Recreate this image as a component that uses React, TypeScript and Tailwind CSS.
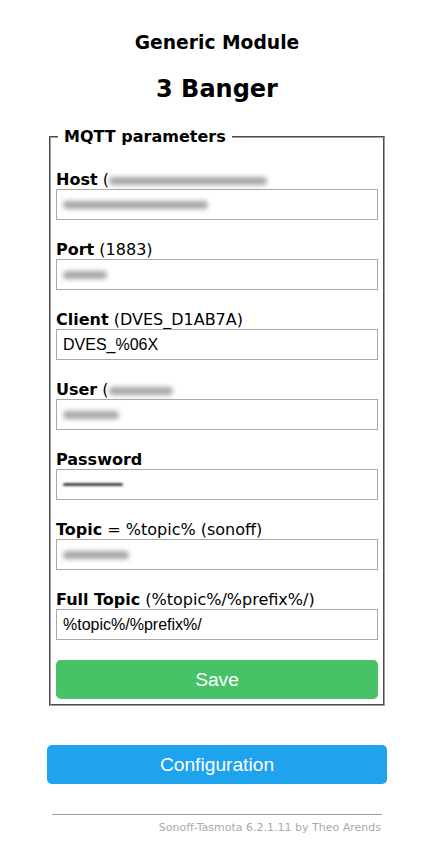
import React from "react";

const labelFont = "font-['DejaVu_Sans',Verdana,sans-serif]";
const inputFont = "font-['Liberation_Sans',Arial,sans-serif]";

function Blur({ text, w }: { text: string; w: string }) {
  return (
    <span
      className={`inline-block align-middle ${w} h-[8px] rounded-full bg-[#a5a5a5] blur-[2.5px]`}
      aria-label={text}
    />
  );
}

function Field({
  label,
  hint,
  value,
  blurValue,
}: {
  label: string;
  hint?: React.ReactNode;
  value?: string;
  blurValue?: React.ReactNode;
}) {
  return (
    <div className="flex flex-col">
      <div className={`${labelFont} text-[16px] leading-[19px] text-black whitespace-nowrap`}>
        <b>{label}</b> {hint}
      </div>
      <div
        className={`${inputFont} flex h-[31px] w-full items-center border border-solid border-[#a9a9a9] bg-white px-[6px] text-[16px] text-black`}
      >
        {value}
        {blurValue}
      </div>
    </div>
  );
}

function App() {
  return (
    <div className="min-h-[852px] w-full bg-white">
      <div className="ml-[47px] flex w-[340px] flex-col pt-[32px]">
        <h3 className={`${labelFont} text-center text-[18.72px] font-bold leading-[22px] text-black`}>
          Generic Module
        </h3>
        <h2 className={`${labelFont} mt-[21px] text-center text-[24px] font-bold leading-[28px] text-black`}>
          3 Banger
        </h2>
        <fieldset className="mx-[2px] mt-[24px] border-2 border-[#a0a0a0] px-[5px] pb-[5px] [border-style:groove]">
          <legend className={`${labelFont} ml-[2px] px-[6px] text-[16px] font-bold leading-[19px] text-black`}>
            MQTT parameters
          </legend>
          <div className="flex flex-col gap-[20px] pt-[24px]">
            <Field
              label="Host"
              hint={
                <span className="text-black">
                  (<Blur text="host" w="w-[158px]" />
                </span>
              }
              blurValue={<Blur text="host" w="w-[145px]" />}
            />
            <Field label="Port" hint="(1883)" blurValue={<Blur text="port" w="w-[44px]" />} />
            <Field label="Client" hint="(DVES_D1AB7A)" value="DVES_%06X" />
            <Field
              label="User"
              hint={
                <span>
                  (<Blur text="user" w="w-[64px]" />
                </span>
              }
              blurValue={<Blur text="user" w="w-[56px]" />}
            />
            <Field
              label="Password"
              blurValue={
                <span
                  className="inline-block h-[3px] w-[60px] rounded-full bg-[#444] blur-[1.2px]"
                  aria-label="password"
                />
              }
            />
            <Field label="Topic" hint="= %topic% (sonoff)" blurValue={<Blur text="topic" w="w-[66px]" />} />
            <Field label="Full Topic" hint="(%topic%/%prefix%/)" value="%topic%/%prefix%/" />
            <button
              className={`${inputFont} h-[39px] w-full rounded-[0.3rem] bg-[#47c266] text-[19.2px] leading-[39px] text-white`}
            >
              Save
            </button>
          </div>
        </fieldset>
        <button
          className={`${inputFont} mt-[39px] h-[39px] w-full rounded-[0.3rem] bg-[#1fa3ec] text-[19.2px] leading-[39px] text-white`}
        >
          Configuration
        </button>
        <div className="mx-[5px] mt-[30px] border-t border-solid border-[#a0a0a0]" />
        <div className={`${labelFont} mr-[6px] mt-[6px] text-right text-[11px] leading-[13px] text-[#aaa]`}>
          Sonoff-Tasmota 6.2.1.11 by Theo Arends
        </div>
      </div>
    </div>
  );
}

export default App;
